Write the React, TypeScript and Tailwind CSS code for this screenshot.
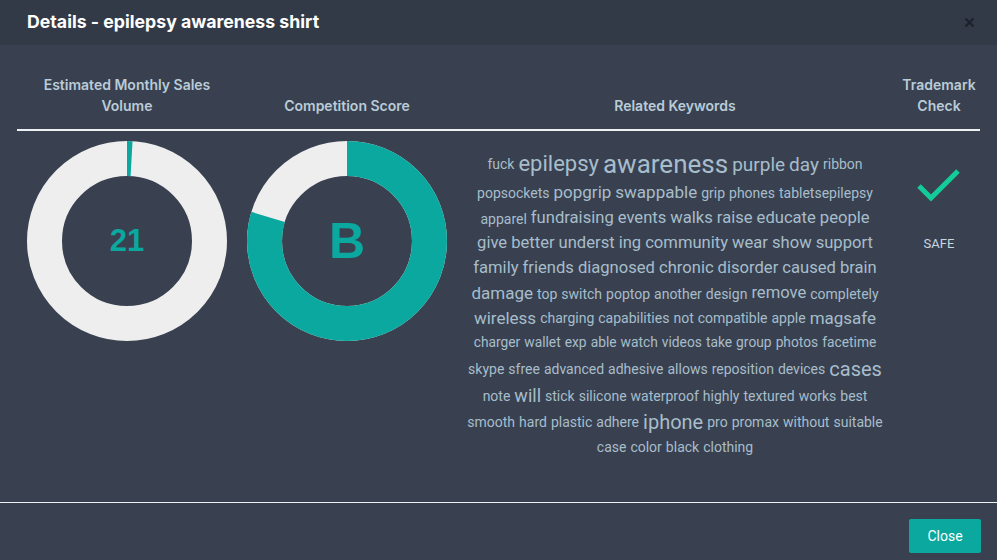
import React from "react";

type Word = [string, number];

const cloudLines: { h: number; words: Word[] }[] = [
    { h: 30, words: [["fuck", 14], ["epilepsy", 22], ["awareness", 26], ["purple", 19], ["day", 19], ["ribbon", 14]] },
    { h: 27, words: [["popsockets", 14], ["popgrip", 17], ["swappable", 17], ["grip", 14], ["phones", 14], ["tabletsepilepsy", 14]] },
    { h: 25, words: [["apparel", 14], ["fundraising", 16.6], ["events", 16.6], ["walks", 16.6], ["raise", 16.6], ["educate", 16.6], ["people", 16.6]] },
    { h: 25, words: [["give", 16.6], ["better", 16.6], ["underst", 16.6], ["ing", 16.6], ["community", 16.6], ["wear", 16.6], ["show", 16.6], ["support", 16.6]] },
    { h: 25, words: [["family", 16.6], ["friends", 16.6], ["diagnosed", 16.6], ["chronic", 16.6], ["disorder", 16.6], ["caused", 16.6], ["brain", 16.6]] },
    { h: 25, words: [["damage", 17], ["top", 14], ["switch", 14], ["poptop", 14], ["another", 14], ["design", 14], ["remove", 16.6], ["completely", 14]] },
    { h: 24, words: [["wireless", 17], ["charging", 14], ["capabilities", 14], ["not", 14], ["compatible", 14], ["apple", 14], ["magsafe", 17]] },
    { h: 25, words: [["charger", 13.8], ["wallet", 13.8], ["exp", 13.8], ["able", 13.8], ["watch", 13.8], ["videos", 13.8], ["take", 13.8], ["group", 13.8], ["photos", 13.8], ["facetime", 13.8]] },
    { h: 27, words: [["skype", 14], ["sfree", 14], ["advanced", 14], ["adhesive", 14], ["allows", 14], ["reposition", 14], ["devices", 14], ["cases", 20]] },
    { h: 27, words: [["note", 14], ["will", 18], ["stick", 14], ["silicone", 14], ["waterproof", 14], ["highly", 14], ["textured", 14], ["works", 14], ["best", 14]] },
    { h: 26, words: [["smooth", 14], ["hard", 14], ["plastic", 14], ["adhere", 14], ["iphone", 20], ["pro", 14], ["promax", 14], ["without", 14], ["suitable", 14]] },
    { h: 24, words: [["case", 14], ["color", 14], ["black", 14], ["clothing", 14]] },
];

function Donut({ percent, label, big }: { percent: number; label: string; big?: boolean }) {
    const r = 82.5;
    const c = 2 * Math.PI * r;
    return (
        <div className="relative w-[200px] h-[200px]">
            <svg width="200" height="200" viewBox="0 0 200 200">
                <circle cx="100" cy="100" r={r} fill="none" stroke="#eeeeee" strokeWidth="35" />
                <circle
                    cx="100"
                    cy="100"
                    r={r}
                    fill="none"
                    stroke="#0ba89f"
                    strokeWidth="35"
                    strokeDasharray={`${(c * percent) / 100} ${c}`}
                    transform="rotate(-90 100 100)"
                />
            </svg>
            <div
                className={`absolute inset-0 flex items-center justify-center font-bold text-[#0ba89f] font-['Liberation_Sans',sans-serif] ${
                    big ? "text-[50px]" : "text-[31px]"
                }`}
            >
                {label}
            </div>
        </div>
    );
}

export default function App() {
    return (
        <div className="w-[997px] h-[560px] bg-[#394150] flex flex-col font-['Inter',sans-serif]">
            {/* HEADER */}
            <div className="h-[45px] bg-[#323a47] flex items-center justify-between pl-[27px] pr-[22px] shrink-0">
                <h3 className="text-[17.7px] font-bold text-white">Details - epilepsy awareness shirt</h3>
                <svg width="11" height="11" viewBox="0 0 11 11" className="mb-[1px]">
                    <path d="M1.5 1.5 L9.5 9.5 M9.5 1.5 L1.5 9.5" stroke="#1c212a" strokeWidth="2.2" />
                </svg>
            </div>

            {/* BODY */}
            <div className="flex-1 px-[17px] pt-[29px]">
                <div className="grid grid-cols-[220px_220px_436px_92px] border-b-2 border-[#eef0f2] pb-[13px] text-[14px] font-semibold text-[#b9ccd8] leading-[21px] text-center">
                    <div className="flex items-end justify-center">Estimated Monthly Sales<br />Volume</div>
                    <div className="flex items-end justify-center">Competition Score</div>
                    <div className="flex items-end justify-center">Related Keywords</div>
                    <div className="flex items-end justify-center">Trademark<br />Check</div>
                </div>

                <div className="grid grid-cols-[220px_220px_436px_92px] pt-[10px]">
                    <div className="flex justify-center">
                        <Donut percent={0.9} label="21" />
                    </div>
                    <div className="flex justify-center">
                        <Donut percent={79.6} label="B" big />
                    </div>
                    <div className="flex flex-col items-center pt-[8px] text-[#a7bdcb] font-['Roboto',sans-serif]">
                        {cloudLines.map((line, i) => (
                            <div key={i} className="flex items-center justify-center gap-x-[4px] whitespace-nowrap" style={{ height: line.h }}>
                                {line.words.map(([w, s], j) => (
                                    <span key={j} style={{ fontSize: s }} className="leading-none">
                                        {w}
                                    </span>
                                ))}
                            </div>
                        ))}
                    </div>
                    <div className="flex flex-col items-center pt-[27px]">
                        <svg width="46" height="36" viewBox="0 0 46 36">
                            <path d="M3 18 L15 30 L42 3" fill="none" stroke="#14cc9a" strokeWidth="5" />
                        </svg>
                        <div className="mt-[30px] text-[13px] text-[#c9d7e0] font-['Roboto',sans-serif]">SAFE</div>
                    </div>
                </div>
            </div>

            {/* FOOTER */}
            <div className="h-[58px] border-t border-[#eef0f2] flex items-start justify-end pt-[16px] pr-[16px] shrink-0">
                <button className="w-[72px] h-[34px] bg-[#0ba89f] text-white text-[14px] rounded-[2px] font-['Roboto',sans-serif]">
                    Close
                </button>
            </div>
        </div>
    );
}
